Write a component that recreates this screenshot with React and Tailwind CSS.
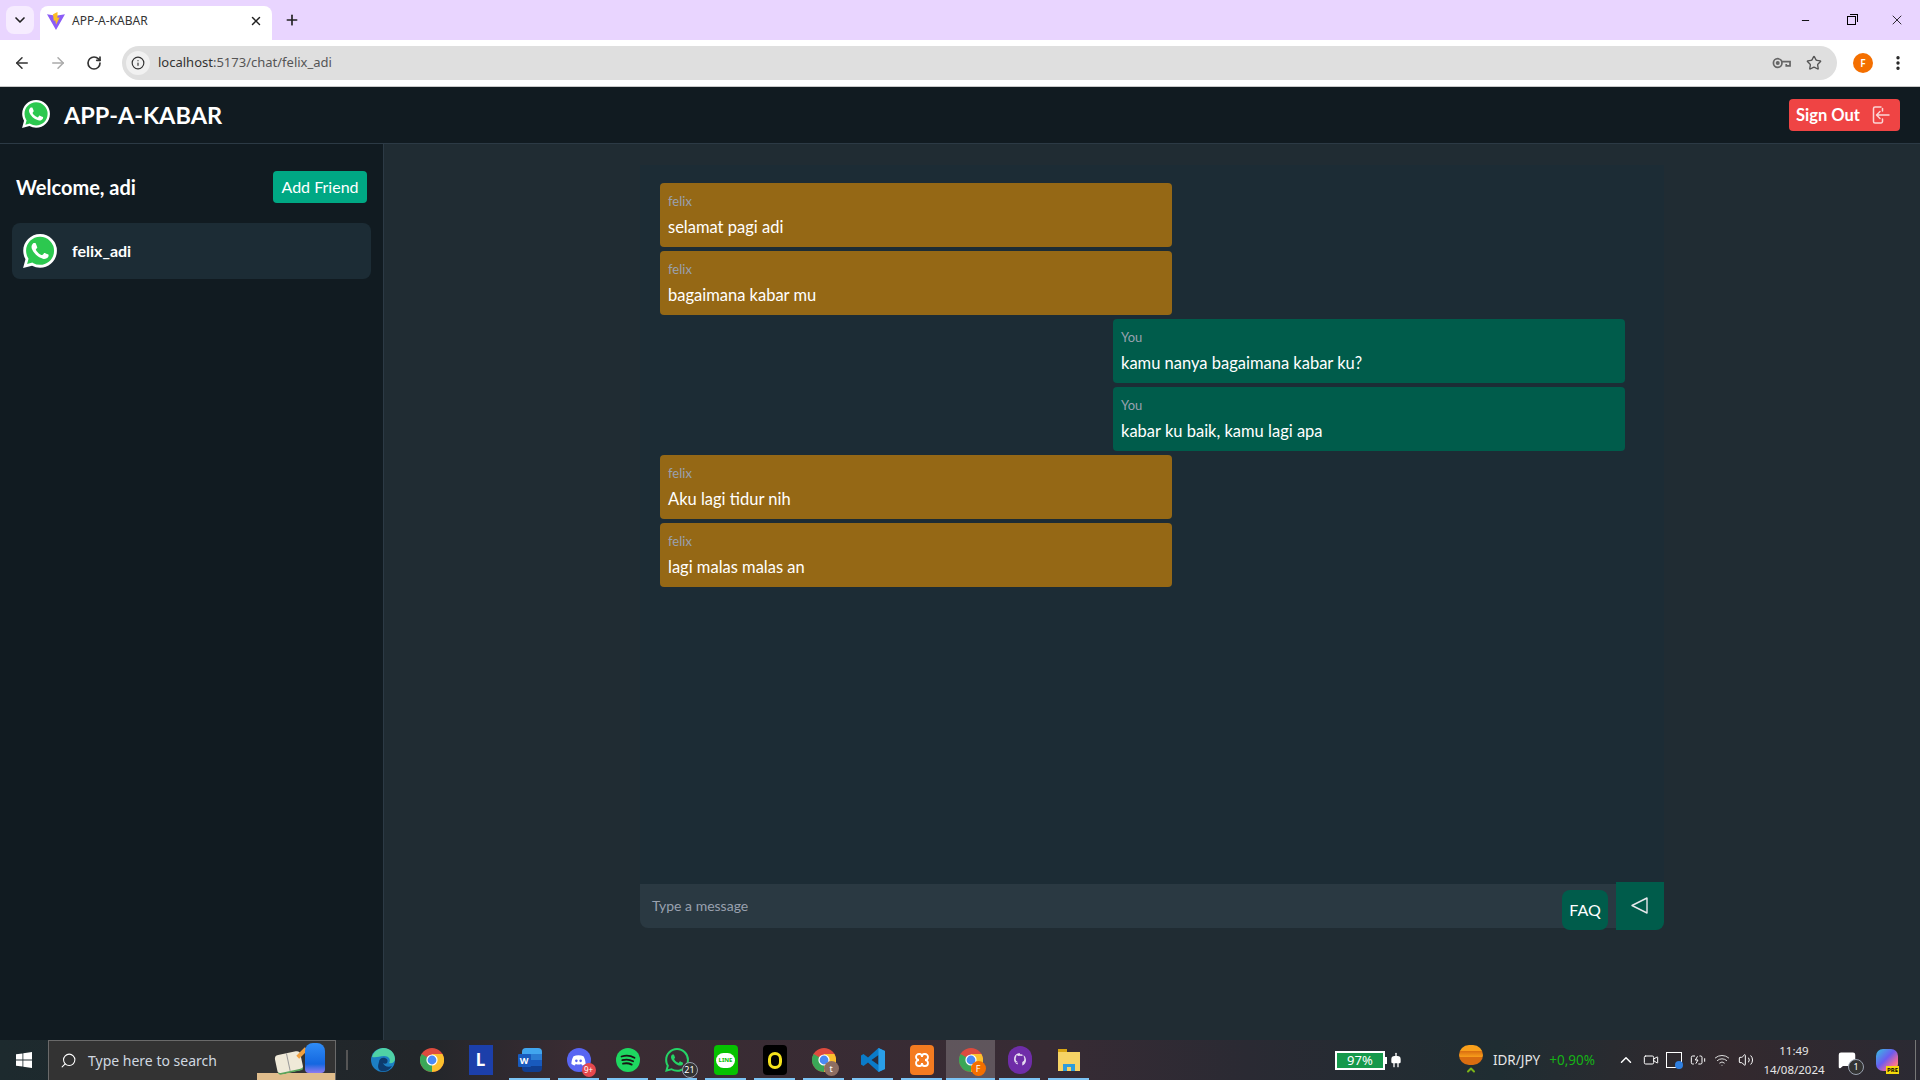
import { ChevronDown, X, Plus, ArrowLeft, ArrowRight, RotateCw, Info, Star, MoreVertical, Minus, Search, ChevronUp, Video, Volume2, Wifi, MessageSquare, BatteryCharging, Plug } from 'lucide-react';

const font = { fontFamily: 'Lato, "Noto Sans", sans-serif' };

const WA_PATH = 'M17.472 14.382c-.297-.149-1.758-.867-2.03-.967-.273-.099-.471-.148-.67.15-.197.297-.767.966-.94 1.164-.173.199-.347.223-.644.075-.297-.15-1.255-.463-2.39-1.475-.883-.788-1.48-1.761-1.653-2.059-.173-.297-.018-.458.13-.606.134-.133.298-.347.446-.52.149-.174.198-.298.298-.497.099-.198.05-.371-.025-.52-.075-.149-.669-1.612-.916-2.207-.242-.579-.487-.5-.669-.51-.173-.008-.371-.01-.57-.01-.198 0-.52.074-.792.372-.272.297-1.04 1.016-1.04 2.479 0 1.462 1.065 2.875 1.213 3.074.149.198 2.096 3.2 5.077 4.487.709.306 1.262.489 1.694.625.712.227 1.36.195 1.871.118.571-.085 1.758-.719 2.006-1.413.248-.694.248-1.289.173-1.413-.074-.124-.272-.198-.57-.347m-5.421 7.403h-.004a9.87 9.87 0 01-5.031-1.378l-.361-.214-3.741.982.998-3.648-.235-.374a9.86 9.86 0 01-1.51-5.26c.001-5.45 4.436-9.884 9.888-9.884 2.64 0 5.122 1.03 6.988 2.898a9.825 9.825 0 012.893 6.994c-.003 5.45-4.437 9.884-9.885 9.884m8.413-18.297A11.815 11.815 0 0012.05 0C5.495 0 .16 5.335.157 11.892c0 2.096.547 4.142 1.588 5.945L.057 24l6.305-1.654a11.882 11.882 0 005.683 1.448h.005c6.554 0 11.89-5.335 11.893-11.893a11.821 11.821 0 00-3.48-8.413z';

const WhatsAppLogo = ({ className }) => (
  <svg viewBox="0 0 24 24" className={className}>
    <circle cx="12.05" cy="11.9" r="10.6" fill="#2cc84f" />
    <path d="M1.5 22.5l1.5-5.5 3.5 3.5z" fill="#2cc84f" />
    <path d={WA_PATH} fill="#fff" />
  </svg>
);

const ChromeIcon = ({ badge, badgeBg }) => (
  <div className="relative w-6 h-6">
    <svg viewBox="0 0 24 24" className="w-6 h-6">
      <circle cx="12" cy="12" r="12" fill="#dd4b3e" />
      <path d="M12 12L1.6 6A12 12 0 0 0 12 24z" fill="#3aa757" />
      <path d="M12 12v12A12 12 0 0 0 22.4 6H12z" fill="#fbc02d" />
      <circle cx="12" cy="12" r="5.6" fill="#fff" />
      <circle cx="12" cy="12" r="4.4" fill="#4a8af4" />
    </svg>
    {badge && (
      <span className={`absolute -right-[3px] -bottom-[4px] w-[15px] h-[15px] rounded-full flex items-center justify-center text-[9px] text-white ${badgeBg}`}>{badge}</span>
    )}
  </div>
);

const taskbarApps = [
  { key: 'edge', running: false, el: (
    <svg viewBox="0 0 24 24" className="w-6 h-6">
      <circle cx="12" cy="12" r="12" fill="#1c7fc4" />
      <path d="M1 9C3 2 9 0 13 0c6 0 11 5 11 11 0 3-3 5-6 4 2-2 1-7-5-7-5 0-7 2-12 1z" fill="#4fd1a5" />
      <path d="M8 14c0-3 3-5 6-4 3 1 3 3 2 5-1 1-3 1-4 0 1 3 5 5 9 3-3 5-8 6-11 5-4-2-3-6-2-9z" fill="#0d3b6e" />
    </svg>
  ) },
  { key: 'chrome', running: false, el: <ChromeIcon /> },
  { key: 'l', running: false, el: <div className="w-6 h-[30px] bg-[#1c3faa] flex items-center justify-center text-white font-bold text-[17px]">L</div> },
  { key: 'word', running: true, el: (
    <div className="relative w-6 h-6">
      <div className="absolute right-0 top-0 w-5 h-6 rounded-sm bg-[linear-gradient(#41a5ee_25%,#2b7cd3_25%,#2b7cd3_50%,#185abd_50%,#185abd_75%,#103f91_75%)]" />
      <div className="absolute left-0 top-[6px] w-[13px] h-[13px] rounded-[1px] bg-[#185abd] flex items-center justify-center text-white text-[9px] font-bold">W</div>
    </div>
  ) },
  { key: 'discord', running: true, el: (
    <div className="relative w-6 h-6 rounded-full bg-[#5865f2] flex items-center justify-center">
      <svg viewBox="0 0 24 24" className="w-[17px] h-[17px]"><path d="M5 6c4-2 10-2 14 0 2 3 3 7 3 11-2 1-3 2-5 2l-1-2c-3 1-5 1-8 0l-1 2c-2 0-3-1-5-2 0-4 1-8 3-11z" fill="#fff" /><circle cx="9" cy="12.5" r="1.8" fill="#5865f2" /><circle cx="15" cy="12.5" r="1.8" fill="#5865f2" /></svg>
      <span className="absolute -right-[5px] -bottom-[5px] w-[14px] h-[14px] rounded-full bg-[#e5484d] text-white text-[8px] flex items-center justify-center">9+</span>
    </div>
  ) },
  { key: 'spotify', running: true, el: (
    <svg viewBox="0 0 24 24" className="w-6 h-6">
      <circle cx="12" cy="12" r="12" fill="#1ed760" />
      <path d="M5.5 8.5c4-1.2 9-1 13 1.2M6.3 12.200c3.500-1 7.500-.7 10.800 1.100M7 15.700c3-.8 6-.5 8.700.9" stroke="#191414" strokeWidth="1.8" strokeLinecap="round" fill="none" />
    </svg>
  ) },
  { key: 'whatsapp', running: true, el: (
    <div className="relative w-6 h-6">
      <svg viewBox="0 0 24 24" className="w-6 h-6"><path d={WA_PATH} fill="#25d366" /></svg>
      <span className="absolute -right-[9px] -bottom-[6px] w-[16px] h-[16px] rounded-full border border-gray-400 bg-[#333] text-white text-[9px] flex items-center justify-center">21</span>
    </div>
  ) },
  { key: 'line', running: true, el: (
    <div className="w-6 h-[30px] rounded bg-[#06c100] flex items-center justify-center">
      <div className="w-[19px] h-[15px] rounded-full bg-white flex items-center justify-center text-[#06c100] text-[6px] font-bold">LINE</div>
    </div>
  ) },
  { key: 'q', running: true, el: (
    <div className="w-6 h-[30px] rounded bg-black flex items-center justify-center">
      <div className="w-[14px] h-[17px] rounded-full border-[3px] border-[#f5e21c]" />
    </div>
  ) },
  { key: 'chrome-t', running: true, el: <ChromeIcon badge="t" badgeBg="bg-[#8d6e63]" /> },
  { key: 'vscode', running: true, el: (
    <svg viewBox="0 0 24 24" className="w-6 h-6">
      <path d="M17.500 0L24 3v18l-6.500 3L7 14.500 2.500 18 0 16.500V7.500L2.500 6 7 9.500z" fill="#0a7bc8" />
      <path d="M17.500 7L10.500 12l7 5z" fill="#2b2b38" />
      <path d="M17.500 0L24 3v18l-6.500 3z" fill="#2a9fe8" />
    </svg>
  ) },
  { key: 'xampp', running: true, el: (
    <div className="w-6 h-[30px] rounded-sm bg-[#f47b20] flex items-center justify-center">
      <svg viewBox="0 0 24 24" className="w-[18px] h-[18px]"><path d="M8 4a4 4 0 0 0 0 8 4 4 0 0 0 0 8h1c2 0 3-2 3-4 0 2 1 4 3 4h1a4 4 0 0 0 0-8 4 4 0 0 0 0-8h-1c-2 0-3 2-3 4 0-2-1-4-3-4z" fill="none" stroke="#fff" strokeWidth="2.4" /></svg>
    </div>
  ) },
  { key: 'chrome-f', running: true, active: true, el: <ChromeIcon badge="F" badgeBg="bg-[#f46f00]" /> },
  { key: 'github', running: true, el: (
    <div className="w-6 h-[28px] rounded-full bg-[#6f2da8] flex items-center justify-center">
      <svg viewBox="0 0 24 24" className="w-[18px] h-[18px]"><path d="M12 3C7 3 4 6.500 4 11c0 3.500 2 6 5 7v-2c-2 .4-3-.6-3.400-1.600 1 .3 1.800 1.200 3.400.8 0-1-1-1.400-2-2-1-1.200-1-4 0-5.200-.2-1 0-2 .4-2.500 1 0 2 .6 2.600 1a8 8 0 0 1 4 0c.6-.4 1.600-1 2.600-1 .4.500.6 1.500.4 2.500 1 1.200 1 4 0 5.200-1 .6-2 1-2 2v4c3-1 5-3.500 5-7 0-4.500-3-8-8-8z" fill="#e5dcf0" /></svg>
    </div>
  ) },
  { key: 'files', running: true, el: (
    <div className="relative w-[22px] h-[22px]">
      <div className="absolute left-0 top-0 w-[9px] h-[4px] bg-[#d9a514]" />
      <div className="absolute left-0 top-[3px] w-[22px] h-[19px] bg-[#f6d365]" />
      <div className="absolute left-[5px] bottom-0 w-[12px] h-[7px] bg-[#2d9cdb]" />
      <div className="absolute left-[9px] bottom-0 w-[4px] h-[4px] bg-[#f6d365]" />
    </div>
  ) },
];

const messages = [
  { id: 1, sender: 'felix', text: 'selamat pagi adi' },
  { id: 2, sender: 'felix', text: 'bagaimana kabar mu' },
  { id: 3, sender: 'You', text: 'kamu nanya bagaimana kabar ku?' },
  { id: 4, sender: 'You', text: 'kabar ku baik, kamu lagi apa' },
  { id: 5, sender: 'felix', text: 'Aku lagi tidur nih' },
  { id: 6, sender: 'felix', text: 'lagi malas malas an' },
];

const BrowserChrome = () => (
  <div className="shrink-0" style={{ fontFamily: '"Noto Sans", sans-serif' }}>
    {/* Tabs */}
    <div className="h-10 bg-[#e9d5ff] flex items-end pl-[6px]">
      <div className="self-start mt-[6px] w-[28px] h-[28px] rounded-lg bg-[#f6ecff] flex items-center justify-center">
        <ChevronDown className="w-4 h-4 text-[#222]" strokeWidth={2.5} />
      </div>
      <div className="ml-[6px] w-[232px] h-[34px] bg-white rounded-t-lg flex items-center pl-[7px] pr-[9px] pb-[4px]">
        <svg viewBox="0 0 24 24" className="w-[18px] h-[18px] shrink-0">
          <path d="M0 3l12 2 12-2-12 21z" fill="#8b5cf6" />
          <path d="M14 0L8 3l1 9 2-1 1 6 5-10-3 1z" fill="#fbbf24" />
        </svg>
        <span className="ml-[7px] text-xs text-[#333] flex-1">APP-A-KABAR</span>
        <X className="w-[14px] h-[14px] text-[#222]" strokeWidth={2.5} />
      </div>
      <div className="self-center ml-[12px]">
        <Plus className="w-4 h-4 text-[#222]" strokeWidth={2.5} />
      </div>
      <div className="ml-auto self-start flex h-10 items-center">
        <div className="w-[46px] flex justify-center"><Minus className="w-[11px] h-[11px] text-black" /></div>
        <div className="w-[46px] flex justify-center"><div className="w-[9px] h-[9px] border border-black relative"><div className="absolute -right-[3px] -top-[3px] w-[8px] h-[8px] border-t border-r border-black" /></div></div>
        <div className="w-[46px] flex justify-center"><X className="w-4 h-4 text-black" strokeWidth={1.2} /></div>
      </div>
    </div>
    {/* Address bar */}
    <div className="h-[47px] bg-white border-b border-[#c9c9c9] rounded-t-lg flex items-center pl-[13px] pr-[13px]">
      <ArrowLeft className="w-[18px] h-[18px] text-[#333]" />
      <ArrowRight className="w-[18px] h-[18px] text-[#aaa] ml-[18px]" />
      <RotateCw className="w-4 h-4 text-[#333] ml-[19px]" strokeWidth={2.5} />
      <div className="ml-[20px] flex-1 h-[34px] rounded-full bg-[#dfdfdf] flex items-center pl-[4px] pr-[15px]">
        <div className="w-6 h-6 rounded-full bg-[#f1f1f1] flex items-center justify-center">
          <Info className="w-[14px] h-[14px] text-[#333]" />
        </div>
        <span className="ml-[8px] text-[13px] text-[#555] flex-1">
          <span className="text-[#333]">localhost</span>:5173/chat/felix_adi
        </span>
        <svg viewBox="0 0 20 12" className="w-[19px] h-[12px] mr-[15px]" fill="none" stroke="#666" strokeWidth="1.8">
          <circle cx="6" cy="6" r="4.500" />
          <circle cx="6" cy="6" r="1.200" fill="#666" />
          <path d="M10.500 4.500H19V9h-4V7" />
        </svg>
        <Star className="w-4 h-4 text-[#555]" strokeWidth={2} />
      </div>
      <div className="ml-[16px] w-5 h-5 rounded-full bg-[#f46f00] flex items-center justify-center text-white text-[10px] font-semibold">F</div>
      <MoreVertical className="w-[18px] h-[18px] text-[#222] ml-[16px]" strokeWidth={2.5} />
    </div>
  </div>
);

const Taskbar = () => (
  <div className="shrink-0 h-10 flex items-stretch text-white bg-[linear-gradient(90deg,#1d2a2e_0%,#22262a_22%,#3a2c33_30%,#372b34_55%,#2a2a33_65%,#1f2d32_78%,#33292e_90%,#2b2a33_100%)]" style={{ fontFamily: '"Noto Sans", sans-serif' }}>
    <div className="w-[48px] flex items-center justify-center">
      <svg viewBox="0 0 16 16" className="w-4 h-4"><path d="M0 2.300l6.500-.9v6.200H0zM7.300 1.300L16 0v7.600H7.300zM0 8.400h6.500v6.200L0 13.700zM7.300 8.400H16V16l-8.700-1.200z" fill="#fff" /></svg>
    </div>
    <div className="w-[288px] bg-[#333333] border border-[#6a6a6a] border-b-0 flex items-center pl-[11px] relative overflow-hidden">
      <Search className="w-[17px] h-[17px] text-white -scale-x-100" strokeWidth={1.5} />
      <span className="ml-[11px] text-[14px] text-[#d0d8e0]">Type here to search</span>
      {/* search box illustration */}
      <div className="absolute right-0 bottom-0 w-[78px] h-[7px] bg-[#e0bd8c]" />
      <div className="absolute right-[33px] bottom-[7px] w-[26px] h-[20px] bg-[#efe9d8] border-b-2 border-[#5aa35a] rounded-sm -rotate-12 flex">
        <div className="w-1/2 border-r border-[#999]" />
      </div>
      <div className="absolute right-[31px] top-[6px] w-[4px] h-[12px] bg-[#f0a040] rotate-45" />
      <div className="absolute right-[10px] bottom-[7px] w-[20px] h-[30px] rounded-t-lg rounded-b bg-[linear-gradient(#2f8cf5,#1467e0_70%,#8f7bf0)]" />
    </div>
    <div className="w-[22px] flex items-center justify-center"><div className="w-[2px] h-5 border-x border-[#555]" /></div>
    {taskbarApps.map(app => (
      <div key={app.key} className={`w-[49px] relative flex items-center justify-center ${app.active ? 'bg-white/20' : ''}`}>
        {app.el}
        {app.running && <div className={`absolute bottom-0 h-[2px] bg-[#7cc4f5] ${app.active ? 'left-0 right-0' : 'left-[4px] right-[4px]'}`} />}
      </div>
    ))}
    <div className="flex-1" />
    {/* Tray */}
    <div className="flex items-center">
      <div className="w-[50px] h-[19px] border-2 border-white bg-[#15994b] text-[13px] leading-none flex items-center justify-center">97%</div>
      <div className="w-[2px] h-[7px] bg-white" />
      <Plug className="w-[16px] h-[16px] ml-[1px] rotate-180" fill="#fff" />
      <div className="ml-[54px] w-[26px] flex flex-col items-center">
        <div className="w-[24px] h-[20px] rounded-full bg-[linear-gradient(#f9a01b_30%,#d96d10_30%,#f9a01b_60%,#d96d10_60%)]" />
        <ChevronUp className="w-3 h-3 text-[#7cb518] -mt-[1px]" strokeWidth={4} />
      </div>
      <span className="ml-[9px] text-[13.500px] text-[#e6e6e6]">IDR/JPY</span>
      <span className="ml-[9px] text-[13.500px] text-[#16b316]">+0,90%</span>
      <ChevronUp className="w-[18px] h-[18px] ml-[22px] text-white" />
      <Video className="w-4 h-4 ml-[8px] text-white" strokeWidth={1.5} />
      <div className="ml-[7px] w-4 h-4 border border-white relative"><div className="absolute -right-[2px] -bottom-[2px] w-2 h-2 rounded-full bg-[#2f7fe0]" /></div>
      <BatteryCharging className="w-4 h-4 ml-[8px] text-white" strokeWidth={1.5} />
      <Wifi className="w-4 h-4 ml-[8px] text-[#ddd]" strokeWidth={1.5} />
      <Volume2 className="w-4 h-4 ml-[8px] text-white" strokeWidth={1.5} />
      <div className="ml-[2px] w-[76px] flex flex-col items-center text-[11.500px] leading-[19px] text-[#e6e6e6]">
        <span>11:49</span>
        <span>14/08/2024</span>
      </div>
      <div className="ml-[6px] relative">
        <MessageSquare className="w-[18px] h-[18px] text-white" fill="#fff" />
        <span className="absolute -right-[8px] -bottom-[6px] w-[16px] h-[16px] rounded-full border border-gray-400 bg-[#333] text-[9px] flex items-center justify-center">1</span>
      </div>
      <div className="ml-[20px] relative w-[22px] h-[22px] rounded-[7px] bg-[linear-gradient(135deg,#35c2e0,#6a5cf0_45%,#f06a9a_75%,#f5c542)]">
        <span className="absolute -right-[1px] -bottom-[3px] bg-[#f5d90a] text-black text-[6px] font-bold px-[1px] leading-[8px]">PRE</span>
      </div>
      <div className="w-[17px]" />
      <div className="w-[1px] h-full bg-[#777]" />
      <div className="w-[4px]" />
    </div>
  </div>
);

const Bubble = ({ msg }) => {
  const mine = msg.sender === 'You';
  return (
    <div className={`flex ${mine ? 'justify-end' : 'justify-start'}`}>
      <div className={`w-[512px] h-[64px] rounded px-2 pt-[10px] ${mine ? 'bg-[#005c4b]' : 'bg-[#956815]'}`}>
        <div className="text-[13px] leading-4 text-gray-400">{msg.sender}</div>
        <div className="text-[16.500px] leading-6 mt-[6px] text-white">{msg.text}</div>
      </div>
    </div>
  );
};

export default function App() {
  return (
    <div className="w-[1920px] h-[1080px] flex flex-col overflow-hidden" style={font}>
      <BrowserChrome />

      {/* App header */}
      <header className="h-[57px] shrink-0 bg-[#111b21] border-b border-[#2c3a45] flex items-center justify-between pl-[22px] pr-[20px]">
        <div className="flex items-center">
          <WhatsAppLogo className="w-[28px] h-[28px] -mt-[2px]" />
          <h1 className="ml-[14px] mt-[1px] text-[23.500px] font-bold text-white">APP-A-KABAR</h1>
        </div>
        <button className="h-8 w-[111px] rounded bg-[#ef4444] flex items-center pl-[7px] text-white font-bold text-[16.500px]">
          Sign Out
          <svg viewBox="0 0 20 20" className="w-5 h-5 ml-[10px]" fill="none" stroke="#fbd5d5" strokeWidth="1.5" strokeLinecap="round" strokeLinejoin="round">
            <path d="M11 2H5a1.500 1.500 0 0 0-1.500 1.500v13A1.500 1.500 0 0 0 5 18h6a1.500 1.500 0 0 0 1.500-1.500V14M12.500 6V3.500" />
            <path d="M19 10H7M10 6.500L6.500 10l3.500 3.500" />
          </svg>
        </button>
      </header>

      <div className="flex-1 flex min-h-0">
        {/* Sidebar */}
        <aside className="w-[384px] shrink-0 bg-[#111b21] border-r border-[#2c3a45] px-3">
          <div className="flex items-center justify-between pt-[27px] pl-[4px] pr-[4px]">
            <span className="text-xl font-bold text-white">Welcome, adi</span>
            <button className="h-8 w-[94px] rounded bg-[#00a884] text-white text-base">Add Friend</button>
          </div>
          <div className="mt-[20px] h-[56px] rounded-lg bg-[#1c2c35] flex items-center pl-[11px]">
            <WhatsAppLogo className="w-[34px] h-[34px]" />
            <span className="ml-[15px] text-white text-base font-bold">felix_adi</span>
          </div>
        </aside>

        {/* Chat */}
        <main className="flex-1 bg-[#202c33] min-w-0">
          <div className="mx-auto w-[1024px] pt-[21px] flex flex-col">
            <div className="h-[719px] bg-[#1c2c35] pt-[18px] pl-[20px] pr-[39px] flex flex-col gap-1">
              {messages.map(m => <Bubble key={m.id} msg={m} />)}
            </div>
            <div className="flex items-start -mt-[2px]">
              <div className="relative w-[976px] h-[44px] mt-[2px] bg-[#2a3942] rounded-bl-lg flex items-center pl-3 text-sm text-gray-400">
                Type a message
                <button className="absolute right-[8px] top-[6px] w-[46px] h-[40px] rounded-lg bg-[#005c4b] text-white text-base">FAQ</button>
              </div>
              <button className="w-[48px] h-[48px] bg-[#005c4b] rounded-br-lg flex items-center justify-center">
                <svg viewBox="0 0 20 20" className="w-5 h-5" fill="none" stroke="#e5e7eb" strokeWidth="1.4" strokeLinejoin="round"><path d="M17 2v15L2 9.500z" /></svg>
              </button>
            </div>
          </div>
        </main>
      </div>

      <Taskbar />
    </div>
  );
}
